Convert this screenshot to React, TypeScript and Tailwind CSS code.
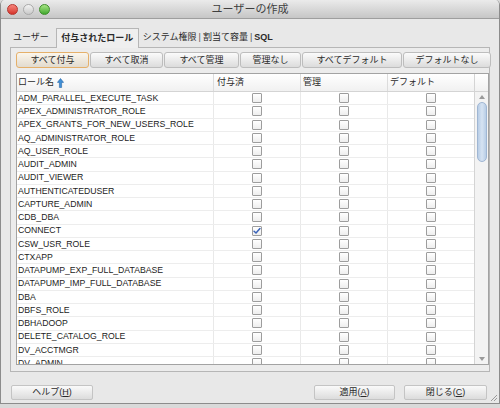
import React from 'react';

interface RoleRow {
  name: string;
  granted: boolean;
}

const roles: RoleRow[] = [
  { name: 'ADM_PARALLEL_EXECUTE_TASK', granted: false },
  { name: 'APEX_ADMINISTRATOR_ROLE', granted: false },
  { name: 'APEX_GRANTS_FOR_NEW_USERS_ROLE', granted: false },
  { name: 'AQ_ADMINISTRATOR_ROLE', granted: false },
  { name: 'AQ_USER_ROLE', granted: false },
  { name: 'AUDIT_ADMIN', granted: false },
  { name: 'AUDIT_VIEWER', granted: false },
  { name: 'AUTHENTICATEDUSER', granted: false },
  { name: 'CAPTURE_ADMIN', granted: false },
  { name: 'CDB_DBA', granted: false },
  { name: 'CONNECT', granted: true },
  { name: 'CSW_USR_ROLE', granted: false },
  { name: 'CTXAPP', granted: false },
  { name: 'DATAPUMP_EXP_FULL_DATABASE', granted: false },
  { name: 'DATAPUMP_IMP_FULL_DATABASE', granted: false },
  { name: 'DBA', granted: false },
  { name: 'DBFS_ROLE', granted: false },
  { name: 'DBHADOOP', granted: false },
  { name: 'DELETE_CATALOG_ROLE', granted: false },
  { name: 'DV_ACCTMGR', granted: false },
  { name: 'DV_ADMIN', granted: false },
];

const toolButtons = [
  { label: 'すべて付与', width: 'w-[73px]', active: true },
  { label: 'すべて取消', width: 'w-[73px]', active: false },
  { label: 'すべて管理', width: 'w-[75px]', active: false },
  { label: '管理なし', width: 'w-[61px]', active: false },
  { label: 'すべてデフォルト', width: 'w-[100px]', active: false },
  { label: 'デフォルトなし', width: 'w-[88px]', active: false },
];

const CheckBox: React.FC<{ checked?: boolean }> = ({ checked }) => (
  <div className="w-[10px] h-[10px] border border-[#9d9d9d] rounded-[1px] bg-gradient-to-b from-white to-[#eeeeee] flex items-center justify-center">
    {checked && (
      <svg width="9" height="8" viewBox="0 0 9 8">
        <path d="M1.2 4.2 L3.4 6.3 L7.8 1.2" fill="none" stroke="#3a63b8" strokeWidth="1.7" strokeLinecap="round" strokeLinejoin="round" />
      </svg>
    )}
  </div>
);

const SortArrow: React.FC = () => (
  <svg width="7" height="10" viewBox="0 0 7 10" className="ml-[3px]">
    <path d="M3.5 0.5 L6.6 4.4 L4.6 4.4 L4.6 9.5 L2.4 9.5 L2.4 4.4 L0.4 4.4 Z" fill="#3f8fd6" stroke="#2867a8" strokeWidth="0.6" />
  </svg>
);

const BottomButton: React.FC<{ label: string; hotkey: string; width: string }> = ({ label, hotkey, width }) => (
  <button
    className={`${width} h-[15px] rounded-[2px] border border-[#c4c4c4] bg-gradient-to-b from-[#fafafa] to-[#dcdcdc] text-[9px] leading-none text-[#2a2a2a] flex items-center justify-center`}
  >
    {label}(<span className="underline">{hotkey}</span>)
  </button>
);

const App: React.FC = () => {
  return (
    <div className="w-[500px] h-[408px] bg-[#d9d9d9] font-['Liberation_Sans','Noto_Sans_CJK_JP',sans-serif] overflow-hidden">
      <div className="h-[404px] flex flex-col border-x border-b border-[#8c8c8c] rounded-t-[5px] overflow-hidden bg-[#e8e8e8] relative">
        {/* title bar */}
        <div className="h-[19px] shrink-0 grid grid-cols-3 items-center bg-gradient-to-b from-[#ebebeb] to-[#c6c6c6] border-b border-[#9e9e9e]">
          <div className="flex items-center gap-[5px] pl-[6px]">
            <span className="w-[11px] h-[11px] rounded-full bg-gradient-to-b from-[#f7847c] to-[#d4312a] border border-[#b5362f]" />
            <span className="w-[11px] h-[11px] rounded-full bg-gradient-to-b from-[#f4f4f4] to-[#c9c9c9] border border-[#a9a9a9]" />
            <span className="w-[11px] h-[11px] rounded-full bg-gradient-to-b from-[#a6e584] to-[#3fa92b] border border-[#3d8c2b]" />
          </div>
          <div className="text-center text-[11px] text-[#3f3f3f] leading-none whitespace-nowrap">ユーザーの作成</div>
          <div />
        </div>

        {/* body */}
        <div className="flex-1 flex flex-col px-[9px]">
          {/* tabs */}
          <div className="flex items-end h-[28px] text-[9px] text-[#2a2a2a] leading-none">
            <div className="h-[20px] flex items-center pl-[3px] pr-[7px]">ユーザー</div>
            <div className="h-[20px] w-[83px] flex items-center justify-center font-bold bg-[#efefef] border-x border-t border-[#b6b6b6] -mb-px relative z-10">
              付与されたロール
            </div>
            <div className="h-[20px] flex items-center pl-[4px]">システム権限</div>
            <div className="h-[20px] flex items-center px-[2px] text-[#555]">|</div>
            <div className="h-[20px] flex items-center">割当て容量</div>
            <div className="h-[20px] flex items-center px-[2px] text-[#555]">|</div>
            <div className="h-[20px] flex items-center font-bold">SQL</div>
          </div>

          {/* panel */}
          <div className="h-[325px] border border-[#b6b6b6] bg-[#ececec] pl-[5px] pr-[2px] pt-[4px] flex flex-col">
            <div className="flex gap-[1px] h-[16px]">
              {toolButtons.map((b) => (
                <button
                  key={b.label}
                  className={`${b.width} h-[16px] shrink-0 rounded-[3px] text-[9px] leading-none text-[#2a2a2a] flex items-center justify-center bg-gradient-to-b ${
                    b.active
                      ? 'from-[#fbf6ec] to-[#e2dbcf] border border-[#e5b06a]'
                      : 'from-[#fbfbfb] to-[#dcdcdc] border border-[#bdbdbd]'
                  }`}
                >
                  {b.label}
                </button>
              ))}
            </div>

            {/* table */}
            <div className="mt-[5px] w-[473px] h-[292px] border border-[#a3a3a3] bg-white flex overflow-hidden">
              <div className="w-[457px] flex flex-col">
                <div className="h-[18px] shrink-0 flex text-[9px] text-[#2a2a2a] leading-none bg-gradient-to-b from-white to-[#f1f1f1] border-b border-[#d4d4d4]">
                  <div className="w-[197px] flex items-center pl-[1px] border-r border-[#dcdcdc]">
                    ロール名
                    <SortArrow />
                  </div>
                  <div className="w-[87px] flex items-center pl-[3px] border-r border-[#dcdcdc]">付与済</div>
                  <div className="w-[87px] flex items-center pl-[2px] border-r border-[#dcdcdc]">管理</div>
                  <div className="w-[86px] flex items-center pl-[2px]">デフォルト</div>
                </div>
                {roles.map((r) => (
                  <div key={r.name} className="h-[13.25px] shrink-0 flex border-b border-[#ededed] text-[8.7px] text-[#1c1c1c] leading-none">
                    <div className="w-[197px] flex items-center pl-[1px] border-r border-[#e9e9e9] whitespace-nowrap">{r.name}</div>
                    <div className="w-[87px] flex items-center justify-center border-r border-[#e9e9e9]">
                      <CheckBox checked={r.granted} />
                    </div>
                    <div className="w-[87px] flex items-center justify-center border-r border-[#e9e9e9]">
                      <CheckBox />
                    </div>
                    <div className="w-[86px] flex items-center justify-center">
                      <CheckBox />
                    </div>
                  </div>
                ))}
              </div>

              {/* scrollbar */}
              <div className="w-[14px] flex flex-col border-l border-[#d4d4d4]">
                <div className="h-[18px] shrink-0 bg-gradient-to-b from-white to-[#f1f1f1] border-b border-[#d4d4d4]" />
                <div className="flex-1 flex flex-col items-center bg-[#f3f3f3] pt-[3px] pb-[3px]">
                  <svg width="6" height="4" viewBox="0 0 6 4">
                    <path d="M0 4 L3 0 L6 4 Z" fill="#9a9a9a" />
                  </svg>
                  <div className="mt-[3px] w-[10px] h-[60px] rounded-full bg-gradient-to-r from-[#b8cde6] via-[#d6e3f2] to-[#b8cde6] border border-[#9fb6d3]" />
                  <div className="flex-1" />
                  <svg width="6" height="4" viewBox="0 0 6 4">
                    <path d="M0 0 L6 0 L3 4 Z" fill="#9a9a9a" />
                  </svg>
                </div>
              </div>
            </div>
          </div>

          {/* footer buttons */}
          <div className="flex items-center mt-[13px] pl-[1px]">
            <BottomButton label="ヘルプ" hotkey="H" width="w-[82px]" />
            <div className="flex-1" />
            <BottomButton label="適用" hotkey="A" width="w-[81px]" />
            <div className="w-[9px]" />
            <BottomButton label="閉じる" hotkey="C" width="w-[83px]" />
            <div className="w-[3px]" />
          </div>
        </div>

        {/* resize grip */}
        <svg width="9" height="9" viewBox="0 0 9 9" className="absolute right-[1px] bottom-[1px]">
          <path d="M8 2 L2 8 M8 5 L5 8" stroke="#9a9a9a" strokeWidth="1" />
        </svg>
      </div>
    </div>
  );
};

export default App;
